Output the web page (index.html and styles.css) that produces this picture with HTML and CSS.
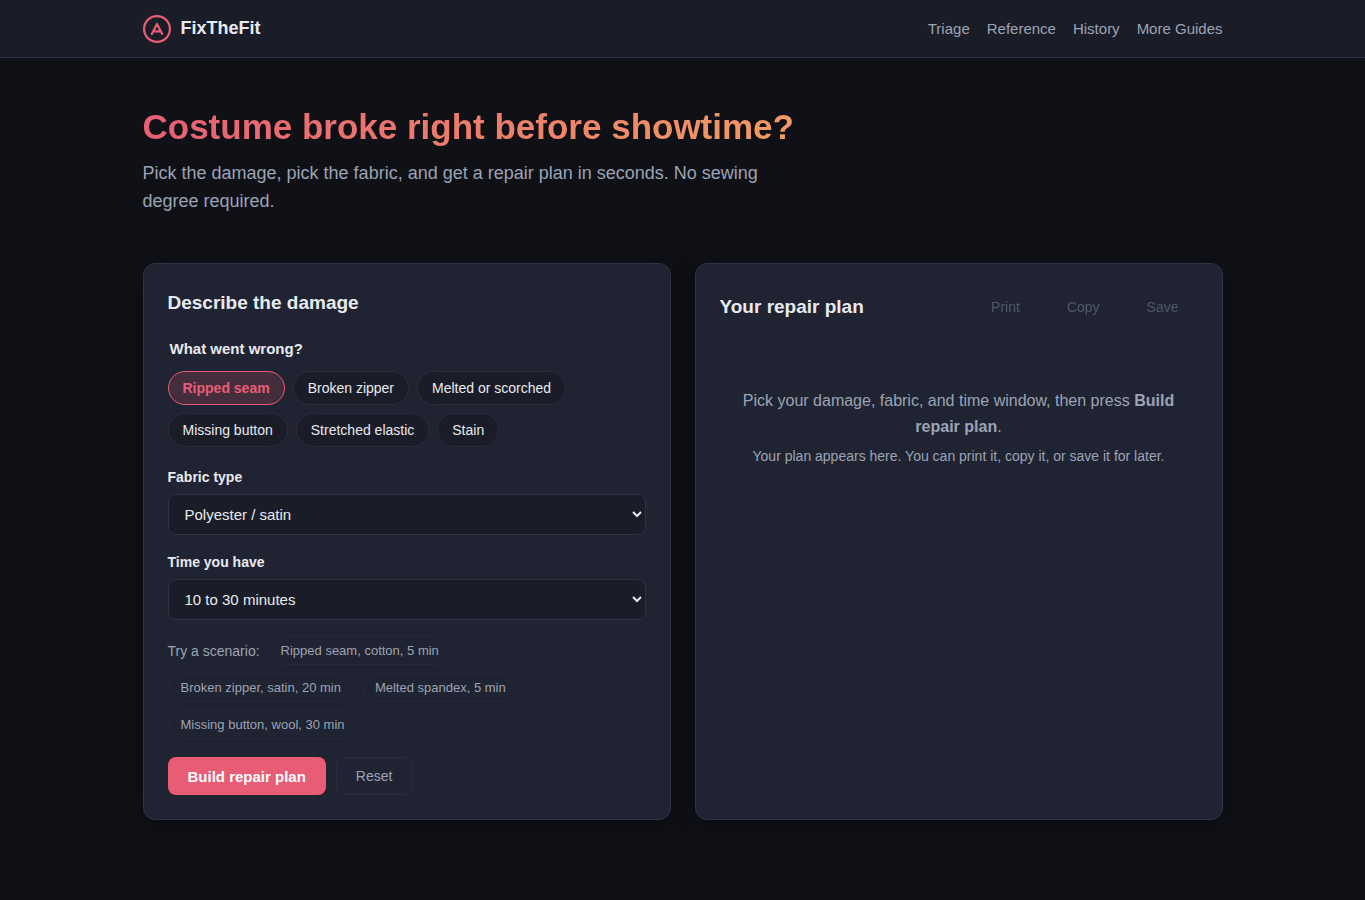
FILE: index.html
```html
<!DOCTYPE html>
<html lang="en">
  <head>
    <meta charset="UTF-8" />
    <meta name="viewport" content="width=device-width, initial-scale=1.0" />
    <title>FixTheFit</title>
    <link rel="stylesheet" href="styles.css">
  </head>

  <body>
    <header class="site-header">
      <div class="container header-inner">
        <a class="logo" href="#">
          <svg width="28" height="28" viewBox="0 0 28 28" fill="none" stroke="currentColor" stroke-width="2.2" stroke-linecap="round" stroke-linejoin="round" aria-hidden="true">
            <circle cx="14" cy="14" r="12.9" />
            <path d="M8.8 19l5.2-10 5.2 10M10.5 16.4h7" />
          </svg>
          FixTheFit
        </a>
        <nav class="site-nav">
          <a href="#triage">Triage</a>
          <a href="#reference">Reference</a>
          <a href="#history">History</a>
          <a href="#guides">More Guides</a>
        </nav>
      </div>
    </header>

    <main class="container">
      <section class="hero">
        <h1>Costume broke right before showtime?</h1>
        <p>Pick the damage, pick the fabric, and get a repair plan in seconds. No sewing degree required.</p>
      </section>

      <div class="triage" id="triage">
        <form class="card">
          <h2>Describe the damage</h2>

          <fieldset class="damage">
            <legend>What went wrong?</legend>
            <div class="chips">
              <button type="button" class="chip active">Ripped seam</button>
              <button type="button" class="chip">Broken zipper</button>
              <button type="button" class="chip">Melted or scorched</button>
              <button type="button" class="chip">Missing button</button>
              <button type="button" class="chip">Stretched elastic</button>
              <button type="button" class="chip">Stain</button>
            </div>
          </fieldset>

          <div class="field">
            <label for="fabric">Fabric type</label>
            <select id="fabric">
              <option>Cotton</option>
              <option selected>Polyester / satin</option>
              <option>Spandex</option>
              <option>Wool</option>
            </select>
          </div>

          <div class="field">
            <label for="time">Time you have</label>
            <select id="time">
              <option>Under 10 minutes</option>
              <option selected>10 to 30 minutes</option>
              <option>Over 30 minutes</option>
            </select>
          </div>

          <div class="scenarios">
            <span>Try a scenario:</span>
            <button type="button" class="scenario">Ripped seam, cotton, 5 min</button>
            <button type="button" class="scenario">Broken zipper, satin, 20 min</button>
            <button type="button" class="scenario">Melted spandex, 5 min</button>
            <button type="button" class="scenario">Missing button, wool, 30 min</button>
          </div>

          <div class="actions">
            <button type="button" class="btn btn-primary">Build repair plan</button>
            <button type="reset" class="btn btn-ghost">Reset</button>
          </div>
        </form>

        <section class="card">
          <div class="plan-header">
            <h2>Your repair plan</h2>
            <div class="plan-actions">
              <button type="button" class="btn-plain" disabled>Print</button>
              <button type="button" class="btn-plain" disabled>Copy</button>
              <button type="button" class="btn-plain" disabled>Save</button>
            </div>
          </div>
          <div class="empty">
            <p>Pick your damage, fabric, and time window, then press <strong>Build repair plan</strong>.</p>
            <p class="hint">Your plan appears here. You can print it, copy it, or save it for later.</p>
          </div>
        </section>
      </div>
    </main>
  </body>
</html>
```
FILE: styles.css
```css
:root {
  --bg: #0f1117;
  --surface: #1a1d27;
  --card: #202432;
  --border: #2e3345;
  --border-soft: #292d3b;
  --text: #e8eaf0;
  --muted: #9ca3b4;
  --accent: #e85d75;
}

* {
  box-sizing: border-box;
  margin: 0;
  padding: 0;
}

body {
  font-family: "Liberation Sans", Arial, sans-serif;
  font-size: 16px;
  line-height: 26px;
  background: var(--bg);
  color: var(--text);
}

button,
select {
  font-family: inherit;
  cursor: pointer;
}

.container {
  max-width: 1120px;
  margin: 0 auto;
  padding: 0 20px;
}

/* Header */
.site-header {
  background: var(--surface);
  border-bottom: 1px solid var(--border);
}

.header-inner {
  display: flex;
  justify-content: space-between;
  align-items: center;
  padding-top: 14px;
  padding-bottom: 14px;
}

.logo {
  display: flex;
  align-items: center;
  gap: 10px;
  font-size: 18px;
  font-weight: 700;
  line-height: 29px;
  color: var(--text);
  text-decoration: none;
}

.logo svg {
  color: var(--accent);
}

.site-nav {
  display: flex;
  gap: 17px;
}

.site-nav a {
  font-size: 15px;
  color: var(--muted);
  text-decoration: none;
}

/* Hero */
.hero {
  max-width: 720px;
  padding: 48px 0;
}

.hero h1 {
  font-size: 35px;
  line-height: 42px;
  margin-bottom: 11px;
  background: linear-gradient(135deg, var(--accent), #f4a261);
  background-clip: text;
  -webkit-background-clip: text;
  color: transparent;
}

.hero p {
  max-width: 640px;
  font-size: 18px;
  line-height: 28px;
  color: var(--muted);
}

/* Cards */
.triage {
  display: grid;
  grid-template-columns: 1fr 1fr;
  gap: 24px;
  padding-bottom: 80px;
}

.card {
  background: var(--card);
  border: 1px solid var(--border);
  border-radius: 12px;
  padding: 24px;
  box-shadow: 0 4px 24px rgba(0, 0, 0, 0.35);
}

.card h2 {
  font-size: 19px;
  line-height: 30px;
}

.damage {
  border: none;
  margin: 18px 0 19px;
}

.damage legend {
  padding: 0 2px;
  margin-bottom: 9px;
  font-size: 15px;
  font-weight: 600;
}

.chips {
  display: flex;
  flex-wrap: wrap;
  gap: 8px;
}

.chip {
  height: 34px;
  padding: 0 14px;
  font-size: 14px;
  color: var(--text);
  background: var(--surface);
  border: 1px solid var(--border-soft);
  border-radius: 17px;
}

.chip.active {
  color: var(--accent);
  font-weight: 600;
  background: rgba(232, 93, 117, 0.18);
  border-color: var(--accent);
}

.field {
  margin-bottom: 16px;
}

.field label {
  display: block;
  font-size: 14px;
  font-weight: 600;
  line-height: 22px;
  margin-bottom: 6px;
}

.field select {
  width: 100%;
  height: 41px;
  padding: 0 12px;
  font-size: 15px;
  color: var(--text);
  background: var(--surface);
  border: 1px solid var(--border);
  border-radius: 8px;
}

.scenarios {
  display: flex;
  flex-wrap: wrap;
  align-items: center;
  gap: 8px;
  font-size: 14px;
  color: var(--muted);
}

.scenario {
  height: 29px;
  padding: 0 12px;
  font-size: 13px;
  color: var(--muted);
  background: transparent;
  border: 1px solid #252938;
  border-radius: 15px;
}

.actions {
  display: flex;
  gap: 10px;
  margin-top: 18px;
}

.btn {
  height: 38px;
  font-size: 15px;
  border: 1px solid transparent;
  border-radius: 8px;
}

.btn-primary {
  padding: 0 19px;
  font-weight: 600;
  color: #fff;
  background: var(--accent);
}

.btn-ghost {
  padding: 0 19px;
  font-size: 14px;
  color: var(--muted);
  background: transparent;
  border-color: var(--border-soft);
}

/* Plan */
.plan-header {
  display: flex;
  justify-content: space-between;
  align-items: center;
}

.plan-actions {
  display: flex;
  gap: 9px;
}

.btn-plain {
  height: 38px;
  padding: 0 19px;
  font-size: 14px;
  color: var(--muted);
  background: transparent;
  border: none;
  opacity: 0.4;
}

.empty {
  padding: 62px 20px;
  text-align: center;
  color: var(--muted);
}

.empty .hint {
  margin-top: 4px;
  font-size: 14px;
  line-height: 24px;
}

@media (max-width: 800px) {
  .triage {
    grid-template-columns: 1fr;
  }
}
```
